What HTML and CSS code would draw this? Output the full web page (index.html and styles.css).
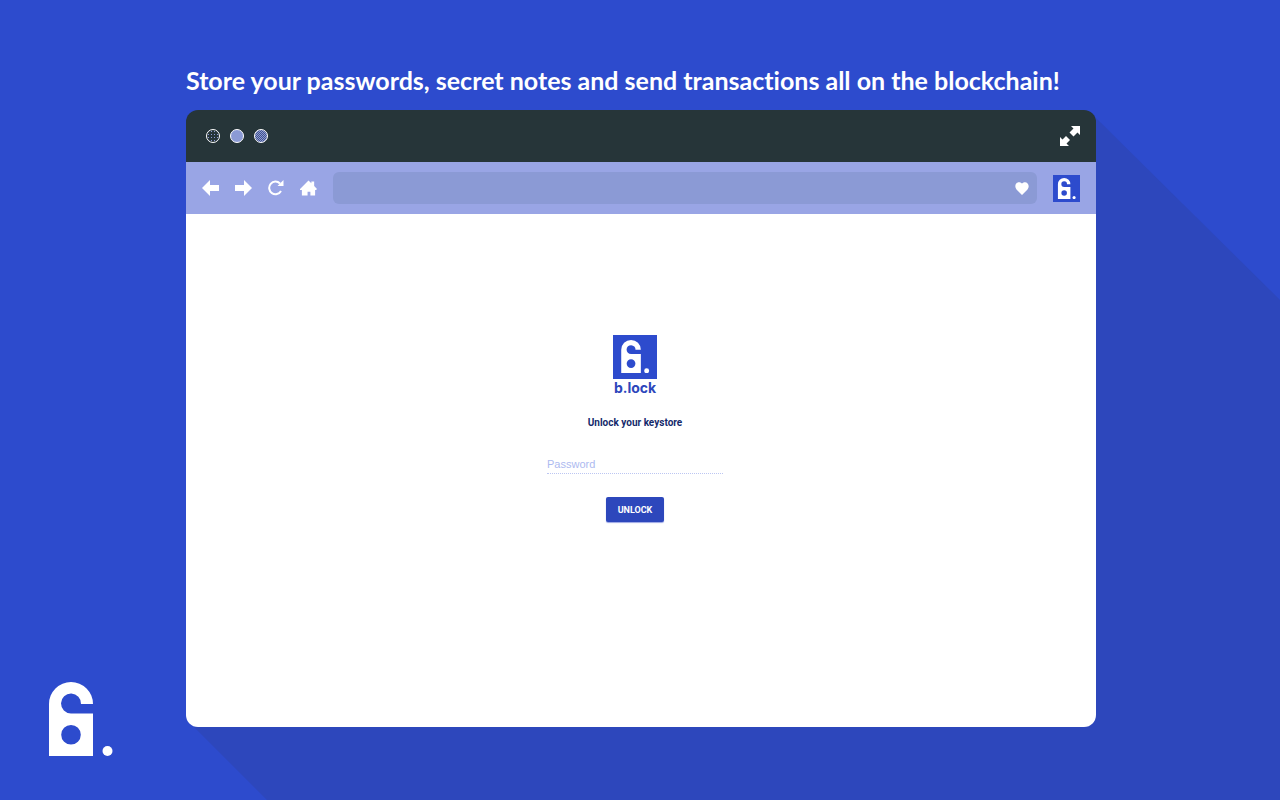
FILE: index.html
```html
<!DOCTYPE html>
<html lang="en">
<head>
<meta charset="utf-8">
<title>b.lock</title>
<link rel="stylesheet" href="styles.css">
</head>
<body>
<svg class="defs" aria-hidden="true">
  <symbol id="lock" viewBox="0 0 64 74">
    <path fill-rule="evenodd" d="M0 74V22a22 22 0 0 1 44 0H32a10 10 0 1 0-10 9.500H44V74zM22 43a9.800 9.800 0 1 0 0 19.600a9.800 9.800 0 1 0 0-19.600z"/>
    <circle cx="58.500" cy="69" r="5"/>
  </symbol>
  <symbol id="lock-small" viewBox="0 0 64 74">
    <path fill-rule="evenodd" d="M0 74V22a22 22 0 0 1 44 0H32a10 10 0 1 0-10 9.500H44V74zM22 43a9.800 9.800 0 1 0 0 19.600a9.800 9.800 0 1 0 0-19.600z"/>
    <circle cx="57" cy="69" r="5.500"/>
  </symbol>
</svg>
<div class="stage">
  <svg class="brand" role="img" aria-label="b.lock"><use href="#lock"/></svg>
  <main class="showcase">
    <h1 class="headline">Store your passwords, secret notes and send transactions all on the blockchain!</h1>
    <section class="window">
      <header class="titlebar">
        <div class="lights"><span class="light light-dark"></span><span class="light"></span><span class="light light-mid"></span></div>
        <button class="icon-button" aria-label="Full screen">
          <svg width="20" height="20" viewBox="0 0 20 20"><path d="M11 0h9v9l-2.500-2.500-4 4-4-4 4-4zM9 20H0v-9l2.500 2.500 3.500-3.500 4 4-3.500 3.500z"/></svg>
        </button>
      </header>
      <nav class="toolbar">
        <div class="nav-buttons">
          <button class="icon-button" aria-label="Back"><svg width="17" height="16" viewBox="0 0 17 16"><path d="M0 8l8-8v5h9v6H8v5z"/></svg></button>
          <button class="icon-button" aria-label="Forward"><svg width="17" height="16" viewBox="0 0 17 16"><path d="M17 8L9 0v5H0v6h9v5z"/></svg></button>
          <button class="icon-button" aria-label="Reload"><svg width="16" height="16" viewBox="0 0 16 16"><path class="stroke" d="M12 3.500A6.300 6.300 0 1 0 13 11"/><path d="M15.500 0v6H9.500z"/></svg></button>
          <button class="icon-button" aria-label="Home"><svg width="17" height="16" viewBox="0 0 18 16"><path d="M9 0l3 3V1h3v5l3 3-1 1h-1v6h-5v-4H8v4H2v-6H0V9z"/></svg></button>
        </div>
        <div class="address">
          <input class="address-input" type="text" aria-label="Address">
          <button class="icon-button" aria-label="Favourite"><svg width="14" height="13" viewBox="0 0 14 13"><path d="M7 13L1.500 7.500C-2 3 3-2.500 7 1.600C11-2.500 16 3 12.500 7.500z"/></svg></button>
        </div>
        <button class="extension" aria-label="b.lock extension"><svg class="extension-mark"><use href="#lock-small"/></svg></button>
      </nav>
      <form class="unlock">
        <div class="tile"><svg class="tile-mark"><use href="#lock-small"/></svg></div>
        <p class="name">b.lock</p>
        <h2 class="prompt">Unlock your keystore</h2>
        <input class="password" type="password" placeholder="Password" aria-label="Password">
        <button class="submit" type="button">UNLOCK</button>
      </form>
    </section>
  </main>
</div>
</body>
</html>
```
FILE: styles.css
```css
* { box-sizing: border-box; }
body {
  margin: 0;
  background: #2d4bcd;
  color: #fff;
  font-family: "Liberation Sans", Arial, sans-serif;
}
.defs { display: block; width: 0; height: 0; }
svg { display: block; fill: currentColor; }
button { border: 0; padding: 0; font: inherit; color: inherit; background: none; }
.stage {
  display: grid;
  grid-template-columns: 186px 1fr 184px;
  min-height: 100vh;
  position: relative;
  z-index: 0;
}
.brand { align-self: end; width: 64px; height: 74px; margin: 0 0 44px 49px; }
.showcase { display: flex; flex-direction: column; padding: 62px 0 73px; min-width: 0; }
.headline {
  margin: 0 0 12px;
  font: 700 25px/36px Lato, sans-serif;
  font-variant-ligatures: none;
  white-space: nowrap;
}
.window { flex: 1; display: flex; flex-direction: column; position: relative; }
.window::before {
  content: "";
  position: absolute;
  z-index: -1;
  inset: 0 -184px -73px 0;
  background: #2d47bc;
  clip-path: polygon(4px calc(100% - 77px), calc(100% - 188px) 4px, 100% 190px, 100% 100%, 81px 100%);
}
.titlebar {
  display: flex;
  align-items: center;
  justify-content: space-between;
  height: 52px;
  padding: 0 16px 0 20px;
  background: #263539;
  border-radius: 12px 12px 0 0;
}
.lights { display: flex; gap: 10px; }
.light { width: 14px; height: 14px; border: 1px solid #fff; border-radius: 50%; background: #8b9ad5; }
.light-dark { background: radial-gradient(#8b9ad5 25%, #263539 30%) 0 0 / 3px 3px; }
.light-mid { background: repeating-conic-gradient(#8b9ad5 0 25%, #42528a 0 50%) 0 0 / 2px 2px; }
.toolbar {
  display: flex;
  align-items: center;
  gap: 16px;
  height: 52px;
  padding: 0 16px;
  background: #99a5e5;
}
.nav-buttons { display: flex; width: 115px; justify-content: space-between; }
.stroke { fill: none; stroke: currentColor; stroke-width: 2; }
.address {
  flex: 1;
  display: flex;
  align-items: center;
  height: 32px;
  padding-right: 8px;
  background: #8b9ad5;
  border-radius: 6px;
}
.address-input { flex: 1; min-width: 0; border: 0; background: none; color: #fff; outline: none; }
.extension { display: flex; width: 27px; height: 27px; padding: 3px 0 0 4px; background: #2d4bcd; }
.extension-mark { width: 20px; height: 21px; }
.unlock {
  flex: 1;
  display: flex;
  flex-direction: column;
  align-items: center;
  padding: 121px 12px 0 0;
  background: #fff;
  border-radius: 0 0 12px 12px;
}
.tile { width: 44px; height: 44px; padding: 5px 0 0 8px; background: #2d4bcd; }
.tile-mark { width: 29px; height: 33px; }
.name { margin: 0; color: #2d47bc; font: 700 14px/18px Inter, sans-serif; }
.prompt { margin: 20px 0 0; color: #152a6b; font: 700 10px/12px Roboto, sans-serif; }
.password {
  width: 176px;
  height: 20px;
  margin-top: 25px;
  padding: 0;
  border: 0;
  border-bottom: 1px dotted #bcc6f2;
  color: #2d47bc;
  font: 11px/16px "Liberation Sans", Arial, sans-serif;
  outline: none;
}
.password::placeholder { color: #adbaf0; opacity: 1; }
.submit {
  width: 58px;
  height: 25px;
  margin-top: 23px;
  border-radius: 2px;
  background: #2d47bc;
  box-shadow: 0 1px 1px #99a5e5;
  font: 700 9px/12px Roboto, sans-serif;
}
```
